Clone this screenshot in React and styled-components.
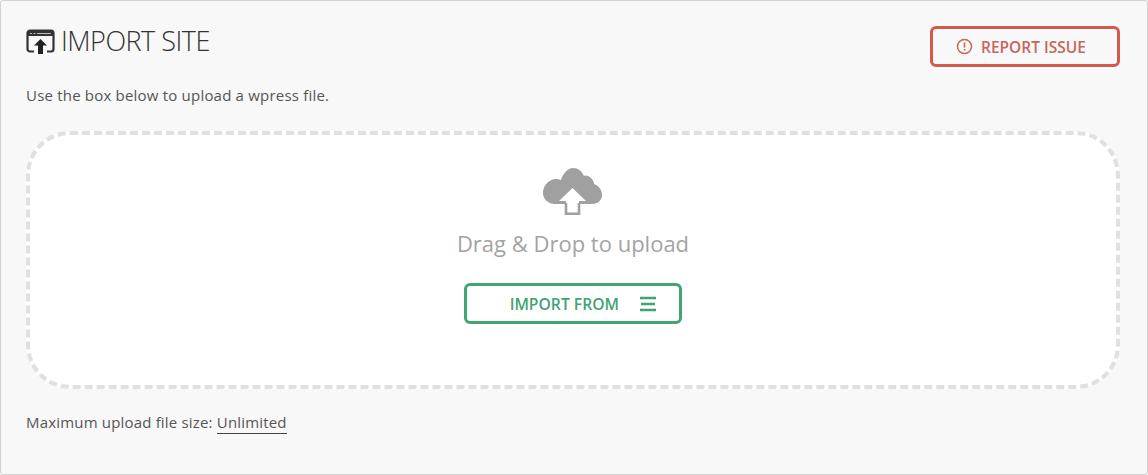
import React from "react";
import styled, { createGlobalStyle } from "styled-components";

const GlobalStyle = createGlobalStyle`
  html, body {
    margin: 0;
    padding: 0;
    background: #f8f8f8;
  }
  * {
    box-sizing: border-box;
  }
`;

const Panel = styled.div`
  width: 1148px;
  height: 475px;
  padding: 25px 27px 0 25px;
  background: #f8f8f8;
  border: 1px solid #d2d2d2;
  border-radius: 3px;
  font-family: "Open Sans", "Noto Sans", sans-serif;
  color: #555;
`;

const Header = styled.div`
  display: flex;
  justify-content: space-between;
  align-items: flex-start;
  height: 40px;
`;

const Title = styled.h1`
  display: flex;
  align-items: center;
  gap: 6px;
  margin: 0;
  height: 30px;
  font-size: 27px;
  line-height: 28px;
  font-weight: 300;
  letter-spacing: -0.5px;
  color: #333;
`;

const ReportButton = styled.button`
  display: flex;
  align-items: center;
  gap: 8px;
  width: 190px;
  height: 41px;
  padding: 0 0 0 23px;
  background: transparent;
  border: 3px solid #d25a4b;
  border-radius: 6px;
  font-family: inherit;
  font-size: 15.5px;
  font-weight: 600;
  color: #c9655a;
`;

const Hint = styled.p`
  margin: 19px 0 0;
  height: 20px;
  font-size: 15px;
  letter-spacing: 0.2px;
  line-height: 20px;
  color: #555;
`;

const DropZone = styled.div`
  display: flex;
  flex-direction: column;
  align-items: center;
  width: 1094px;
  height: 258px;
  margin-top: 26px;
  padding-top: 33px;
  background: #fff;
  border: 4px dashed #e0e0e0;
  border-radius: 44px;
`;

const DropText = styled.div`
  margin-top: 11px;
  height: 32px;
  font-size: 22px;
  line-height: 32px;
  color: #a3a3a3;
`;

const ImportButton = styled.button`
  display: flex;
  align-items: center;
  justify-content: flex-end;
  gap: 21px;
  width: 218px;
  height: 41px;
  margin-top: 24px;
  padding: 0 23px 0 0;
  background: transparent;
  border: 3px solid #3fa66f;
  border-radius: 6px;
  font-family: inherit;
  font-size: 15.7px;
  font-weight: 600;
  color: #43a372;
`;

const Footer = styled.p`
  margin: 23px 0 0;
  font-size: 15px;
  letter-spacing: 0.18px;
  line-height: 20px;
  color: #555;
`;

const SizeLimit = styled.span`
  border-bottom: 1px solid #444;
  padding-bottom: 1px;
`;

const SiteIcon = () => (
  <svg width="29" height="25" viewBox="0 0 29 25">
    <path
      d="M8 22.500H4A2.500 2.500 0 0 1 1.500 20V4A2.500 2.500 0 0 1 4 1.500h21A2.500 2.500 0 0 1 27.500 4v16a2.500 2.500 0 0 1-2.500 2.500h-4"
      fill="none"
      stroke="#333"
      strokeWidth="2.200"
    />
    <rect x="2" y="2" width="25" height="5" fill="#333" />
    <path d="M4 4.500h2M7.500 4.500h2M11 4.500h14" stroke="#bbb" strokeWidth="1" />
    <path d="M14.500 10 21 16.500h-4V25h-5v-8.500H8z" fill="#222" />
  </svg>
);

const AlertIcon = () => (
  <svg width="17" height="17" viewBox="0 0 17 17">
    <circle cx="8.500" cy="8.500" r="7" fill="none" stroke="#c9655a" strokeWidth="1.500" />
    <path d="M8.500 4.500v5M8.500 11v1.500" stroke="#c9655a" strokeWidth="1.600" />
  </svg>
);

const CloudIcon = () => (
  <svg width="60" height="48" viewBox="0 0 60 48">
    <path
      d="M12 36C5 36 0 31 0 25 0 18 5 12 12 11c2 0 4 0 6 1C20 5 25 0 30 0c5 0 9 3 11 8 2-1 5 0 7 2 2 2 3 4 3 6 5 2 8 6 8 11 0 5-4 9-10 9z"
      fill="#a0a0a0"
    />
    <path d="M29.500 20 43 33H36V44.500H23V33H16z" fill="#fff" />
    <path d="M36 35V45.700H23V35" fill="none" stroke="#a0a0a0" strokeWidth="2.600" />
  </svg>
);

const MenuIcon = () => (
  <svg width="16" height="16" viewBox="0 0 16 16">
    <path d="M0 2h16M1 8h14M0 14h16" stroke="#43a372" strokeWidth="2.400" />
  </svg>
);

const App = () => (
  <Panel>
    <GlobalStyle />
    <Header>
      <Title>
        <SiteIcon />
        IMPORT SITE
      </Title>
      <ReportButton>
        <AlertIcon />
        REPORT ISSUE
      </ReportButton>
    </Header>
    <Hint>Use the box below to upload a wpress file.</Hint>
    <DropZone>
      <CloudIcon />
      <DropText>Drag &amp; Drop to upload</DropText>
      <ImportButton>
        IMPORT FROM
        <MenuIcon />
      </ImportButton>
    </DropZone>
    <Footer>
      Maximum upload file size: <SizeLimit>Unlimited</SizeLimit>
    </Footer>
  </Panel>
);

export default App;
